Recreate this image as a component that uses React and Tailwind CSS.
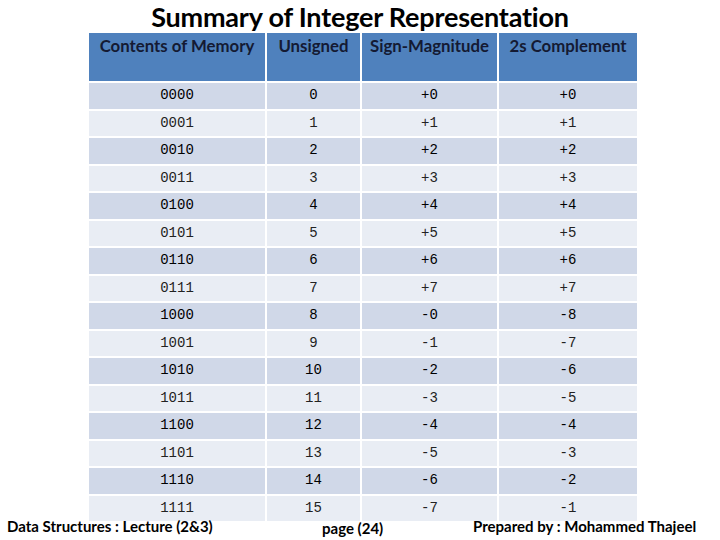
import React from "react";

const rows = [
  ["0000", "0", "+0", "+0"],
  ["0001", "1", "+1", "+1"],
  ["0010", "2", "+2", "+2"],
  ["0011", "3", "+3", "+3"],
  ["0100", "4", "+4", "+4"],
  ["0101", "5", "+5", "+5"],
  ["0110", "6", "+6", "+6"],
  ["0111", "7", "+7", "+7"],
  ["1000", "8", "-0", "-8"],
  ["1001", "9", "-1", "-7"],
  ["1010", "10", "-2", "-6"],
  ["1011", "11", "-3", "-5"],
  ["1100", "12", "-4", "-4"],
  ["1101", "13", "-5", "-3"],
  ["1110", "14", "-6", "-2"],
  ["1111", "15", "-7", "-1"],
];

const headers = ["Contents of Memory", "Unsigned", "Sign-Magnitude", "2s Complement"];

export default function App() {
  return (
    <div
      className="relative w-[720px] h-[540px] bg-white overflow-hidden"
      style={{ fontFamily: "Lato, 'Liberation Sans', sans-serif" }}
    >
      <h1 className="h-[33px] pt-[2px] text-center text-[27px] leading-[29px] font-bold text-black tracking-[-0.2px]">
        Summary of Integer Representation
      </h1>
      <div className="ml-[89px] w-[548px] grid grid-cols-[176px_93px_135px_138px] gap-[2px]">
        {headers.map((h) => (
          <div
            key={h}
            className="h-[48px] bg-[#4f81bd] text-center pt-[3px] text-[16.8px] leading-[20px] font-bold text-[#141a33]"
          >
            {h}
          </div>
        ))}
        {rows.map((r, i) =>
          r.map((c, j) => (
            <div
              key={i + "-" + j}
              className={
                "h-[25.5px] flex items-center justify-center text-[14px] " +
                (i % 2 === 0 ? "bg-[#d0d8e8] text-black" : "bg-[#e9edf4] text-[#222]")
              }
              style={{ fontFamily: "'Liberation Mono', 'DejaVu Sans Mono', monospace" }}
            >
              {c}
            </div>
          ))
        )}
      </div>
      <div className="-mt-[4px] flex items-start text-[15px] leading-[18px] font-bold text-black">
        <div className="w-[315px] pl-[7px]">Data Structures : Lecture (2&amp;3)</div>
        <div className="w-[158px] pt-[2px] pl-[7px]">page (24)</div>
        <div>Prepared by : Mohammed Thajeel</div>
      </div>
    </div>
  );
}
